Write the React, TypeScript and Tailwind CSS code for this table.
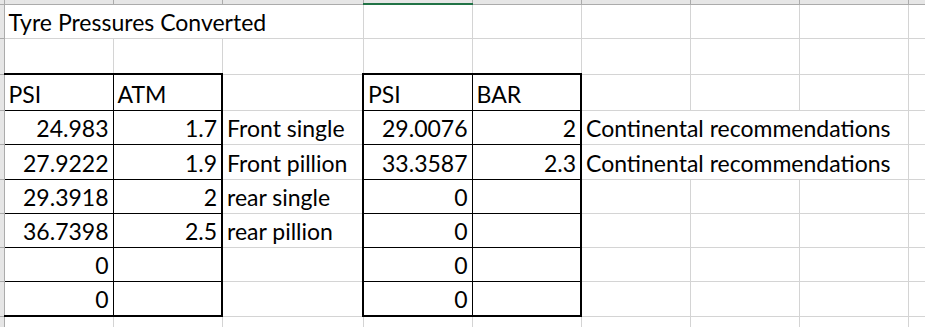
import React from "react";

type Cell = { t?: string; r?: boolean; span?: number };

const colW = [4, 109, 109, 141, 109, 109, 109, 109, 109, 60];
const rowH = [34, 36, 36, 34, 35, 34, 34, 34, 35, 30];

const rows: Cell[][] = [
  [{ t: "Tyre Pressures Converted", span: 3 }, {}, {}, {}, {}, {}, {}],
  [{}, {}, {}, {}, {}, {}, {}, {}, {}],
  [{ t: "PSI" }, { t: "ATM" }, {}, { t: "PSI" }, { t: "BAR" }, {}, {}, {}, {}],
  [
    { t: "24.983", r: true },
    { t: "1.7", r: true },
    { t: "Front single" },
    { t: "29.0076", r: true },
    { t: "2", r: true },
    { t: "Continental recommendations", span: 3 },
    {},
  ],
  [
    { t: "27.9222", r: true },
    { t: "1.9", r: true },
    { t: "Front pillion" },
    { t: "33.3587", r: true },
    { t: "2.3", r: true },
    { t: "Continental recommendations", span: 3 },
    {},
  ],
  [{ t: "29.3918", r: true }, { t: "2", r: true }, { t: "rear single" }, { t: "0", r: true }, {}, {}, {}, {}, {}],
  [{ t: "36.7398", r: true }, { t: "2.5", r: true }, { t: "rear pillion" }, { t: "0", r: true }, {}, {}, {}, {}, {}],
  [{ t: "0", r: true }, {}, {}, { t: "0", r: true }, {}, {}, {}, {}, {}],
  [{ t: "0", r: true }, {}, {}, { t: "0", r: true }, {}, {}, {}, {}, {}],
  [{}, {}, {}, {}, {}, {}, {}, {}, {}],
];

// which border a cell gets, Excel style: boxed ranges A3:B9 and D3:E9
function borderFor(ri: number, ci: number) {
  const row = ri + 1;
  const boxed = row >= 3 && row <= 9 && (ci <= 1 || ci === 3 || ci === 4);
  if (!boxed) return "border border-[#d4d4d4]";
  let c = "border border-black";
  if (row === 3) c += " border-t-2";
  if (row === 9) c += " border-b-2";
  if (ci === 1 || ci === 4) c += " border-r-2";
  if (ci === 3) c += " border-l-2";
  return c;
}

const App = () => {
  return (
    <div className="w-[925px] h-[327px] overflow-hidden bg-white font-['Lato',sans-serif] text-[23px] text-black">
      <table className="table-fixed border-collapse w-[968px]">
        <colgroup>
          {colW.map((w, i) => (
            <col key={i} style={{ width: w }} />
          ))}
        </colgroup>
        <thead>
          <tr className="h-[4px]">
            <th className="p-0 bg-[#e6e6e6] border-r border-b border-[#ababab]" />
            {colW.slice(1).map((_, i) => (
              <th
                key={i}
                className={
                  i === 3
                    ? "p-0 bg-[#e6e6e6] border-r border-[#ababab] border-b-2 border-b-[#217346]"
                    : "p-0 bg-[#e6e6e6] border-r border-b border-[#ababab]"
                }
              />
            ))}
          </tr>
        </thead>
        <tbody>
          {rows.map((row, ri) => {
            let ci = 0;
            return (
              <tr key={ri} style={{ height: rowH[ri] }}>
                <td className="p-0 bg-[#e6e6e6] border-r border-b border-[#ababab]" />
                {row.map((cell, k) => {
                  const start = ci;
                  ci += cell.span ?? 1;
                  return (
                    <td
                      key={k}
                      colSpan={cell.span}
                      className={`${borderFor(ri, start)} align-bottom whitespace-nowrap overflow-visible px-[4px] pb-[3px] pt-0 leading-[26px] ${
                        cell.r ? "text-right" : "text-left"
                      }`}
                    >
                      {cell.t}
                    </td>
                  );
                })}
              </tr>
            );
          })}
        </tbody>
      </table>
    </div>
  );
};

export default App;
